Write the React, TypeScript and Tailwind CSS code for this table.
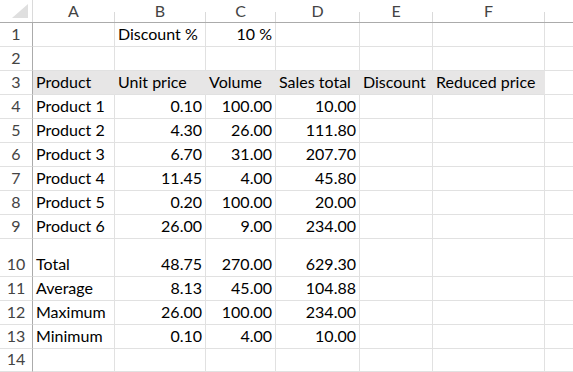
import React from 'react';

type Cell = { v: string; right?: boolean };

const cols = ['A', 'B', 'C', 'D', 'E', 'F', ''];

const t = (v: string): Cell => ({ v });
const n = (v: string): Cell => ({ v, right: true });

const rows: { num: number; cells: Cell[]; tall?: boolean; shaded?: boolean }[] = [
  { num: 1, cells: [t(''), t('Discount %'), n('10 %')] },
  { num: 2, cells: [] },
  {
    num: 3,
    shaded: true,
    cells: [t('Product'), t('Unit price'), t('Volume'), t('Sales total'), t('Discount'), t('Reduced price')],
  },
  { num: 4, cells: [t('Product 1'), n('0.10'), n('100.00'), n('10.00')] },
  { num: 5, cells: [t('Product 2'), n('4.30'), n('26.00'), n('111.80')] },
  { num: 6, cells: [t('Product 3'), n('6.70'), n('31.00'), n('207.70')] },
  { num: 7, cells: [t('Product 4'), n('11.45'), n('4.00'), n('45.80')] },
  { num: 8, cells: [t('Product 5'), n('0.20'), n('100.00'), n('20.00')] },
  { num: 9, cells: [t('Product 6'), n('26.00'), n('9.00'), n('234.00')] },
  { num: 10, tall: true, cells: [t('Total'), n('48.75'), n('270.00'), n('629.30')] },
  { num: 11, cells: [t('Average'), n('8.13'), n('45.00'), n('104.88')] },
  { num: 12, cells: [t('Maximum'), n('26.00'), n('100.00'), n('234.00')] },
  { num: 13, cells: [t('Minimum'), n('0.10'), n('4.00'), n('10.00')] },
  { num: 14, cells: [] },
];

const gridCols = 'grid grid-cols-[33px_82px_91px_70px_84px_73px_112px_1fr]';

function HeaderRow() {
  return (
    <div className={`${gridCols} h-[23px] border-b border-[#ababab]`}>
      <div className="flex items-end justify-end border-r border-[#dadada] pr-[4px] pb-[4px]">
        <svg width="16" height="14" viewBox="0 0 16 14">
          <polygon points="16,0 16,14 0,14" fill="#dfdfdf" />
        </svg>
      </div>
      {cols.map((c, i) => (
        <div key={i} className="flex items-stretch">
          <div className="flex-1 flex items-center justify-center text-[16px] text-[#444] leading-none pb-[1px]">
            {c}
          </div>
          {c && <div className="w-px h-[10px] self-end bg-[#dadada]" />}
        </div>
      ))}
    </div>
  );
}

function Row({ num, cells, tall, shaded }: { num: number; cells: Cell[]; tall?: boolean; shaded?: boolean }) {
  const height = num === 14 ? 'h-[23px]' : tall ? 'h-[38px]' : 'h-[24px]';
  return (
    <div className={`${gridCols} ${height}`}>
      <div className="flex items-end justify-center border-r border-b border-r-[#ababab] border-b-[#e1e1e1] pb-[4px] text-[16px] leading-none text-[#444]">
        {num}
      </div>
      {cols.map((_, i) => {
        const cell = cells[i];
        const fill = shaded && i < 6;
        return (
          <div
            key={i}
            className={`flex items-end px-[3px] pb-[4px] text-[16px] leading-none text-black whitespace-nowrap overflow-visible border-b border-[#e1e1e1] ${
              i < 6 ? 'border-r' : ''
            } ${fill ? 'bg-[#e7e6e6] border-r-[#e7e6e6]' : 'border-r-[#e1e1e1]'} ${
              cell?.right ? 'justify-end' : 'justify-start'
            }`}
          >
            {cell?.v}
          </div>
        );
      })}
    </div>
  );
}

export default function App() {
  return (
    <div
      className="w-[573px] h-[372px] overflow-hidden bg-white"
      style={{ fontFamily: 'Lato, "Open Sans", sans-serif' }}
    >
      <HeaderRow />
      {rows.map((r) => (
        <Row key={r.num} {...r} />
      ))}
    </div>
  );
}
